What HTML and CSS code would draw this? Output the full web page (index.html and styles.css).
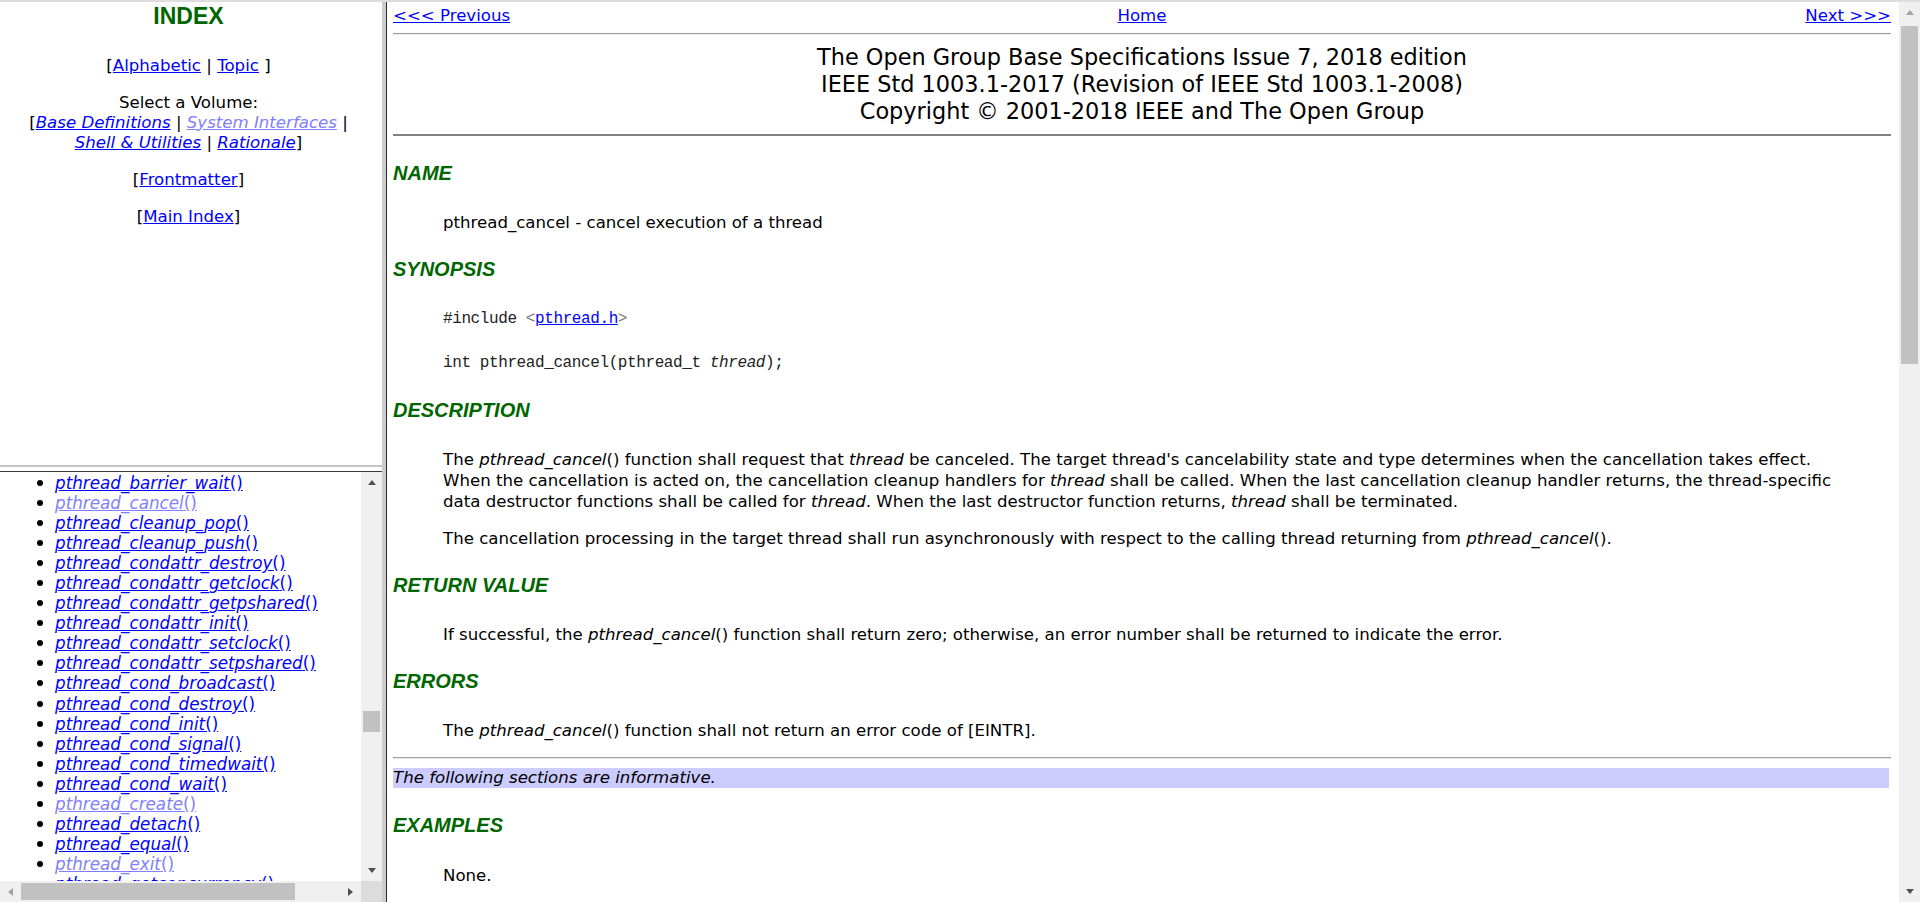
FILE: index.html
```html
<!DOCTYPE html>
<html lang="en">
<head>
<meta charset="utf-8">
<title>pthread_cancel</title>
<link rel="stylesheet" href="styles.css">
</head>
<body>
<div class="frameset">
  <div class="left">
    <div class="index-pane">
      <h2 class="index-title">INDEX</h2>
      <p class="idx-p">[<a href="#">Alphabetic</a> | <a href="#">Topic</a> ]</p>
      <p class="idx-p">Select a Volume:<br>[<a href="#"><i>Base Definitions</i></a> | <a href="#" class="visited"><i>System Interfaces</i></a> |<br><a href="#"><i>Shell &amp; Utilities</i></a> | <a href="#"><i>Rationale</i></a>]</p>
      <p class="idx-p">[<a href="#">Frontmatter</a>]</p>
      <p class="idx-p">[<a href="#">Main Index</a>]</p>
    </div>
    <div class="hsplit"></div>
    <div class="list-pane">
      <div class="list-view">
        <div class="list-scroll">
          <ul class="func-list">
            <li><a href="#"><i>pthread_barrier_wait</i>()</a></li>
            <li><a href="#" class="visited"><i>pthread_cancel</i>()</a></li>
            <li><a href="#"><i>pthread_cleanup_pop</i>()</a></li>
            <li><a href="#"><i>pthread_cleanup_push</i>()</a></li>
            <li><a href="#"><i>pthread_condattr_destroy</i>()</a></li>
            <li><a href="#"><i>pthread_condattr_getclock</i>()</a></li>
            <li><a href="#"><i>pthread_condattr_getpshared</i>()</a></li>
            <li><a href="#"><i>pthread_condattr_init</i>()</a></li>
            <li><a href="#"><i>pthread_condattr_setclock</i>()</a></li>
            <li><a href="#"><i>pthread_condattr_setpshared</i>()</a></li>
            <li><a href="#"><i>pthread_cond_broadcast</i>()</a></li>
            <li><a href="#"><i>pthread_cond_destroy</i>()</a></li>
            <li><a href="#"><i>pthread_cond_init</i>()</a></li>
            <li><a href="#"><i>pthread_cond_signal</i>()</a></li>
            <li><a href="#"><i>pthread_cond_timedwait</i>()</a></li>
            <li><a href="#"><i>pthread_cond_wait</i>()</a></li>
            <li><a href="#" class="visited"><i>pthread_create</i>()</a></li>
            <li><a href="#"><i>pthread_detach</i>()</a></li>
            <li><a href="#"><i>pthread_equal</i>()</a></li>
            <li><a href="#" class="visited"><i>pthread_exit</i>()</a></li>
            <li><a href="#"><i>pthread_getconcurrency</i>()</a></li>
          </ul>
        </div>
        <div class="vscroll">
          <div class="sb-btn"><span class="arr-up"></span></div>
          <div class="sb-track"><div class="sb-thumb list-thumb"></div></div>
          <div class="sb-btn"><span class="arr-down"></span></div>
        </div>
      </div>
      <div class="hscroll-row">
        <div class="hscroll">
          <div class="sb-btn"><span class="arr-left"></span></div>
          <div class="h-track"><div class="h-thumb"></div></div>
          <div class="sb-btn"><span class="arr-right"></span></div>
        </div>
        <div class="corner"></div>
      </div>
    </div>
  </div>
  <div class="vsplit"></div>
  <div class="main-pane">
    <div class="main-scroll">
      <div class="nav">
        <a href="#" class="nav-prev">&lt;&lt;&lt; Previous</a>
        <a href="#" class="nav-home">Home</a>
        <a href="#" class="nav-next">Next &gt;&gt;&gt;</a>
      </div>
      <hr class="hr-thin">
      <div class="masthead">The Open Group Base Specifications Issue 7, 2018 edition<br>IEEE Std 1003.1-2017 (Revision of IEEE Std 1003.1-2008)<br>Copyright © 2001-2018 IEEE and The Open Group</div>
      <hr class="hr-thick">

      <h4 class="sec first">NAME</h4>
      <div class="blk"><p>pthread_cancel - cancel execution of a thread</p></div>

      <h4 class="sec">SYNOPSIS</h4>
      <div class="blk"><pre class="code">#include <span class="angle">&lt;</span><a href="#">pthread.h</a><span class="angle">&gt;</span>

int pthread_cancel(pthread_t <i>thread</i>);</pre></div>

      <h4 class="sec">DESCRIPTION</h4>
      <div class="blk">
        <p>The <i>pthread_cancel</i>() function shall request that <i>thread</i> be canceled. The target thread's cancelability state and type determines when the cancellation takes effect. When the cancellation is acted on, the cancellation cleanup handlers for <i>thread</i> shall be called. When the last cancellation cleanup handler returns, the thread-specific data destructor functions shall be called for <i>thread</i>. When the last destructor function returns, <i>thread</i> shall be terminated.</p>
        <p>The cancellation processing in the target thread shall run asynchronously with respect to the calling thread returning from <i>pthread_cancel</i>().</p>
      </div>

      <h4 class="sec">RETURN VALUE</h4>
      <div class="blk"><p>If successful, the <i>pthread_cancel</i>() function shall return zero; otherwise, an error number shall be returned to indicate the error.</p></div>

      <h4 class="sec">ERRORS</h4>
      <div class="blk"><p>The <i>pthread_cancel</i>() function shall not return an error code of [EINTR].</p></div>

      <hr class="hr-info">
      <div class="informative"><i>The following sections are informative.</i></div>

      <h4 class="sec">EXAMPLES</h4>
      <div class="blk"><p>None.</p></div>
    </div>
    <div class="vscroll main-vscroll">
      <div class="sb-btn"><span class="arr-up disabled"></span></div>
      <div class="sb-track"><div class="sb-thumb main-thumb"></div></div>
      <div class="sb-btn"><span class="arr-down"></span></div>
    </div>
  </div>
</div>
</body>
</html>
```
FILE: styles.css
```css
* { box-sizing: border-box; }
html, body { margin: 0; padding: 0; height: 100%; overflow: hidden; }
body {
  font-family: "DejaVu Sans", Verdana, sans-serif;
  font-size: 16.6px;
  color: #000;
  background: #fff;
}
a { color: #0000ff; text-decoration: underline; }
a.visited { color: #8080ff; }

.frameset {
  display: flex;
  height: 902px;
  border-top: 2px solid #dedede;
}

/* ---------- left column ---------- */
.left {
  width: 382px;
  flex-shrink: 0;
  display: flex;
  flex-direction: column;
}
.index-pane {
  height: 463px;
  padding: 0 13px 0 8px;
  text-align: center;
  line-height: 20px;
  overflow: hidden;
}
.index-title {
  font-family: "Liberation Sans", Arial, sans-serif;
  font-weight: bold;
  font-size: 23px;
  line-height: 26px;
  color: #006600;
  margin: 1px 0 26.5px;
}
.idx-p { margin: 17px 0; }

.hsplit {
  height: 7px;
  border-top: 2px solid #c4c4c4;
  border-bottom: 1px solid #3a3a3a;
  background: #fff;
}

.list-pane {
  flex: 1;
  display: flex;
  flex-direction: column;
  min-height: 0;
}
.list-view {
  flex: 1;
  display: flex;
  min-height: 0;
}
.list-scroll {
  flex: 1;
  overflow: hidden;
  padding-top: 1px;
}
.func-list {
  list-style: none;
  margin: 0;
  padding: 0;
  font-size: 16.8px;
  line-height: 20px;
  white-space: nowrap;
}
.func-list li {
  display: flex;
  align-items: center;
  height: 20.05px;
}
.func-list li::before {
  content: "";
  width: 6px;
  height: 6px;
  border-radius: 50%;
  background: #000;
  margin: 0 12px 0 37px;
  flex-shrink: 0;
}

/* ---------- scrollbars ---------- */
.vscroll {
  width: 21px;
  flex-shrink: 0;
  background: #f0f0f0;
  display: flex;
  flex-direction: column;
}
.sb-btn {
  width: 21px;
  height: 21px;
  flex-shrink: 0;
  display: flex;
  align-items: center;
  justify-content: center;
}
.sb-track { flex: 1; }
.sb-thumb {
  background: #c1c1c1;
  margin: 0 2px;
}
.list-thumb { margin-top: 218px; height: 21px; }
.main-thumb { margin-top: 3px; height: 338px; }

.arr-up, .arr-down, .arr-left, .arr-right { width: 0; height: 0; display: block; }
.arr-up {
  border-left: 4.5px solid transparent;
  border-right: 4.5px solid transparent;
  border-bottom: 5px solid #505050;
}
.arr-up.disabled { border-bottom-color: #a3a3a3; }
.arr-down {
  border-left: 4.5px solid transparent;
  border-right: 4.5px solid transparent;
  border-top: 5px solid #505050;
}
.arr-left {
  border-top: 4.5px solid transparent;
  border-bottom: 4.5px solid transparent;
  border-right: 5px solid #a3a3a3;
}
.arr-right {
  border-top: 4.5px solid transparent;
  border-bottom: 4.5px solid transparent;
  border-left: 5px solid #505050;
}

.hscroll-row {
  height: 21px;
  flex-shrink: 0;
  display: flex;
}
.hscroll {
  flex: 1;
  display: flex;
  background: #f0f0f0;
}
.h-track {
  flex: 1;
  display: flex;
  align-items: center;
}
.h-thumb {
  width: 274px;
  height: 17px;
  background: #c1c1c1;
}
.corner {
  width: 21px;
  background: #dcdcdc;
}

.vsplit {
  width: 5px;
  flex-shrink: 0;
  background: #cdcdcd;
  border-right: 1px solid #2b2b2b;
}

/* ---------- main frame ---------- */
.main-pane {
  flex: 1;
  display: flex;
  min-width: 0;
}
.main-scroll {
  flex: 1;
  overflow: hidden;
  padding: 4px 8px 0 6px;
}
.nav {
  display: grid;
  grid-template-columns: 1fr 1fr 1fr;
  line-height: 20px;
}
.nav-home { justify-self: center; }
.nav-next { justify-self: end; }

.hr-thin {
  margin: 7px 0 0;
  height: 0;
  border: 0;
  border-top: 1px solid #9c9c9c;
  border-bottom: 1px solid #ececec;
}
.masthead {
  margin-top: 9px;
  text-align: center;
  font-size: 22.4px;
  line-height: 27px;
}
.hr-thick {
  margin: 8.5px 0 0;
  height: 0;
  border: 0;
  border-top: 2px solid #808080;
}
.sec {
  font-family: "Liberation Sans", Arial, sans-serif;
  font-weight: bold;
  font-style: italic;
  font-size: 20px;
  line-height: 24px;
  color: #006600;
  margin: 23.5px 0 27.5px;
}
.sec.first { margin-top: 25px; }
.blk { margin: 0 45px 0 50px; }
.blk p {
  margin: 16px 0;
  line-height: 21px;
}
.code {
  font-family: "Liberation Mono", "Courier New", monospace;
  font-size: 16px;
  letter-spacing: -0.4px;
  line-height: 22px;
  color: #222;
  margin: 0;
}
.angle { color: #777; }
.hr-info {
  margin: 15.5px 0 0;
  height: 0;
  border: 0;
  border-top: 1px solid #a0a0a0;
  border-bottom: 1px solid #e6e6e6;
}
.informative {
  margin: 9px 0 25.2px;
  background: #ccccff;
  line-height: 20px;
  margin-right: 2px;
}
```
